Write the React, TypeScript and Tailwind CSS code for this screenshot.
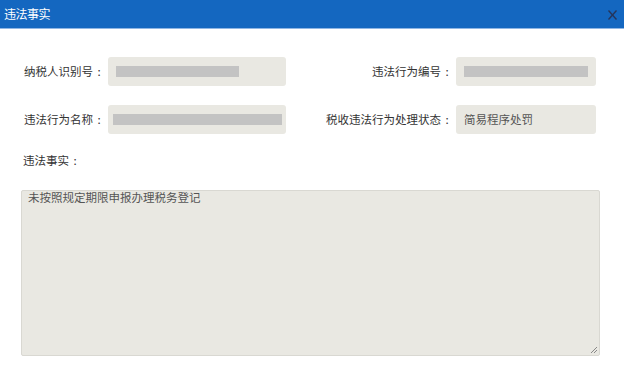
import React from "react";

const font = { fontFamily: '"Noto Sans CJK SC", "Noto Sans", sans-serif' };

const Field = ({ children }: { children?: React.ReactNode }) => (
  <div className="flex items-center h-[29px] rounded-[3px] bg-[#e9e8e2] px-2 text-[11.5px] text-[#555]">
    {children}
  </div>
);

const Bar = ({ w }: { w: string }) => <div className={`h-[11px] bg-[#c3c3c3] ${w}`} />;

const Label = ({ text }: { text: string }) => (
  <div className="flex items-center justify-end pr-[3px] whitespace-nowrap">
    {text}
    <span className="w-[12px] text-center">:</span>
  </div>
);

export default function App() {
  return (
    <div className="w-[624px] h-[373px] bg-white overflow-hidden" style={font}>
      <div className="flex items-center justify-between h-[29px] bg-[#1467c0] border-b border-[#8fb6e4] pl-[4px] pr-[7px]">
        <span className="text-white text-[12px] tracking-[-0.5px]">违法事实</span>
        <svg width="9" height="10" viewBox="0 0 9 10" className="mt-[1px]">
          <line x1="0.5" y1="0.5" x2="8.5" y2="9.5" stroke="#26355a" strokeWidth="1.4" />
          <line x1="8.5" y1="0.5" x2="0.5" y2="9.5" stroke="#26355a" strokeWidth="1.4" />
        </svg>
      </div>

      <div className="grid grid-cols-[108px_178px_170px_140px] gap-y-[19px] mt-[28px] text-[11.5px] text-[#333]">
        <Label text="纳税人识别号" />
        <Field>
          <Bar w="w-[123px]" />
        </Field>
        <Label text="违法行为编号" />
        <Field>
          <Bar w="w-[129px]" />
        </Field>

        <Label text="违法行为名称" />
        <div className="flex items-center h-[29px] rounded-[3px] bg-[#e9e8e2] pl-[5px] pr-[4px]">
          <Bar w="w-[169px]" />
        </div>
        <Label text="税收违法行为处理状态" />
        <Field>简易程序处罚</Field>
      </div>

      <div className="ml-[23px] mt-[17px] h-[18px] leading-[18px] text-[11.5px] text-[#333]">
        违法事实<span className="inline-block w-[12px] text-center">:</span>
      </div>

      <div className="relative ml-[21px] mt-[21px] w-[579px] h-[166px] rounded-[2px] border border-[#d9d8d2] bg-[#e9e8e2] pl-[6px] text-[11.5px] leading-[13px] text-[#555]">
        未按照规定期限申报办理税务登记
        <svg className="absolute right-[1px] bottom-[1px]" width="8" height="8" viewBox="0 0 8 8">
          <line x1="7" y1="1" x2="1" y2="7" stroke="#888" strokeWidth="1" />
          <line x1="7" y1="4" x2="4" y2="7" stroke="#888" strokeWidth="1" />
        </svg>
      </div>
    </div>
  );
}
